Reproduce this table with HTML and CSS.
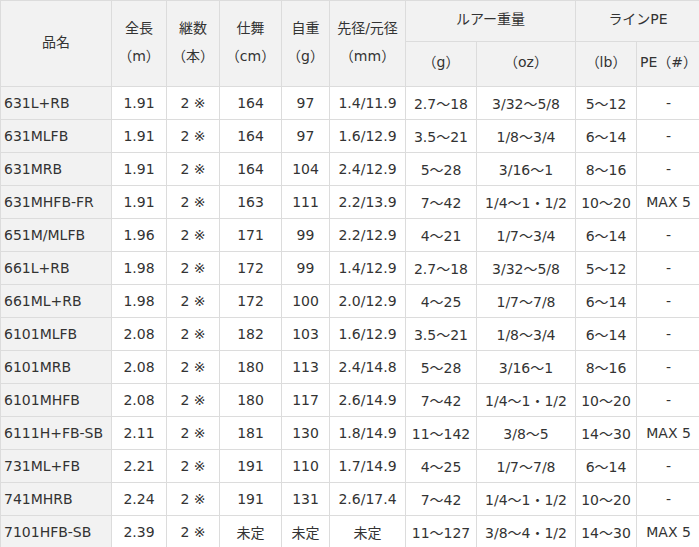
FILE: index.html
```html
<!DOCTYPE html>
<html lang="ja">
<head>
<meta charset="utf-8">
<link rel="stylesheet" href="styles.css">
</head>
<body>
<table class="spec">
<colgroup>
<col class="c-name"><col class="c-len"><col class="c-pcs"><col class="c-close"><col class="c-wt"><col class="c-dia"><col class="c-lg"><col class="c-loz"><col class="c-lb"><col class="c-pe">
</colgroup>
<thead>
<tr class="h1">
<th rowspan="2">品名</th>
<th rowspan="2">全長<br>（m）</th>
<th rowspan="2">継数<br>（本）</th>
<th rowspan="2">仕舞<br>（cm）</th>
<th rowspan="2">自重<br>（g）</th>
<th rowspan="2">先径/元径<br>（mm）</th>
<th colspan="2">ルアー重量</th>
<th colspan="2">ラインPE</th>
</tr>
<tr class="h2">
<th>（g）</th><th>（oz）</th><th>（lb）</th><th>PE（#）</th>
</tr>
</thead>
<tbody>
<tr><th>631L+RB</th><td>1.91</td><td>2 ※</td><td>164</td><td>97</td><td>1.4/11.9</td><td>2.7～18</td><td>3/32～5/8</td><td>5～12</td><td>-</td></tr>
<tr><th>631MLFB</th><td>1.91</td><td>2 ※</td><td>164</td><td>97</td><td>1.6/12.9</td><td>3.5～21</td><td>1/8～3/4</td><td>6～14</td><td>-</td></tr>
<tr><th>631MRB</th><td>1.91</td><td>2 ※</td><td>164</td><td>104</td><td>2.4/12.9</td><td>5～28</td><td>3/16～1</td><td>8～16</td><td>-</td></tr>
<tr><th>631MHFB-FR</th><td>1.91</td><td>2 ※</td><td>163</td><td>111</td><td>2.2/13.9</td><td>7～42</td><td>1/4～1・1/2</td><td>10～20</td><td>MAX 5</td></tr>
<tr><th>651M/MLFB</th><td>1.96</td><td>2 ※</td><td>171</td><td>99</td><td>2.2/12.9</td><td>4～21</td><td>1/7～3/4</td><td>6～14</td><td>-</td></tr>
<tr><th>661L+RB</th><td>1.98</td><td>2 ※</td><td>172</td><td>99</td><td>1.4/12.9</td><td>2.7～18</td><td>3/32～5/8</td><td>5～12</td><td>-</td></tr>
<tr><th>661ML+RB</th><td>1.98</td><td>2 ※</td><td>172</td><td>100</td><td>2.0/12.9</td><td>4～25</td><td>1/7～7/8</td><td>6～14</td><td>-</td></tr>
<tr><th>6101MLFB</th><td>2.08</td><td>2 ※</td><td>182</td><td>103</td><td>1.6/12.9</td><td>3.5～21</td><td>1/8～3/4</td><td>6～14</td><td>-</td></tr>
<tr><th>6101MRB</th><td>2.08</td><td>2 ※</td><td>180</td><td>113</td><td>2.4/14.8</td><td>5～28</td><td>3/16～1</td><td>8～16</td><td>-</td></tr>
<tr><th>6101MHFB</th><td>2.08</td><td>2 ※</td><td>180</td><td>117</td><td>2.6/14.9</td><td>7～42</td><td>1/4～1・1/2</td><td>10～20</td><td>-</td></tr>
<tr><th>6111H+FB-SB</th><td>2.11</td><td>2 ※</td><td>181</td><td>130</td><td>1.8/14.9</td><td>11～142</td><td>3/8～5</td><td>14～30</td><td>MAX 5</td></tr>
<tr><th>731ML+FB</th><td>2.21</td><td>2 ※</td><td>191</td><td>110</td><td>1.7/14.9</td><td>4～25</td><td>1/7～7/8</td><td>6～14</td><td>-</td></tr>
<tr><th>741MHRB</th><td>2.24</td><td>2 ※</td><td>191</td><td>131</td><td>2.6/17.4</td><td>7～42</td><td>1/4～1・1/2</td><td>10～20</td><td>-</td></tr>
<tr><th>7101HFB-SB</th><td>2.39</td><td>2 ※</td><td>未定</td><td>未定</td><td>未定</td><td>11～127</td><td>3/8～4・1/2</td><td>14～30</td><td>MAX 5</td></tr>
</tbody>
</table>
</body>
</html>
```
FILE: styles.css
```css
html, body {
  margin: 0;
  padding: 0;
  background: #fff;
}
.spec {
  border-collapse: collapse;
  table-layout: fixed;
  width: 700px;
  font-family: "DejaVu Sans", "Noto Sans CJK JP", sans-serif;
  font-size: 14px;
  color: #333;
}
.c-name { width: 111px; }
.c-len { width: 55px; }
.c-pcs { width: 53px; }
.c-close { width: 62px; }
.c-wt { width: 48px; }
.c-dia { width: 76px; }
.c-lg { width: 71px; }
.c-loz { width: 99px; }
.c-lb { width: 61px; }
.c-pe { width: 64px; }
.spec th, .spec td {
  border: 1px solid #dcdcdc;
  padding: 0;
  text-align: center;
  font-weight: normal;
  white-space: nowrap;
  overflow: hidden;
}
.spec thead th {
  background: #f2f2f2;
  line-height: 28px;
  padding-bottom: 4px;
}
.spec .h1 th { height: 36px; }
.spec .h2 th { height: 40px; }
.spec tbody th {
  background: #f2f2f2;
  text-align: left;
  padding-left: 3px;
}
.spec tbody th, .spec tbody td {
  height: 32px;
}
```
